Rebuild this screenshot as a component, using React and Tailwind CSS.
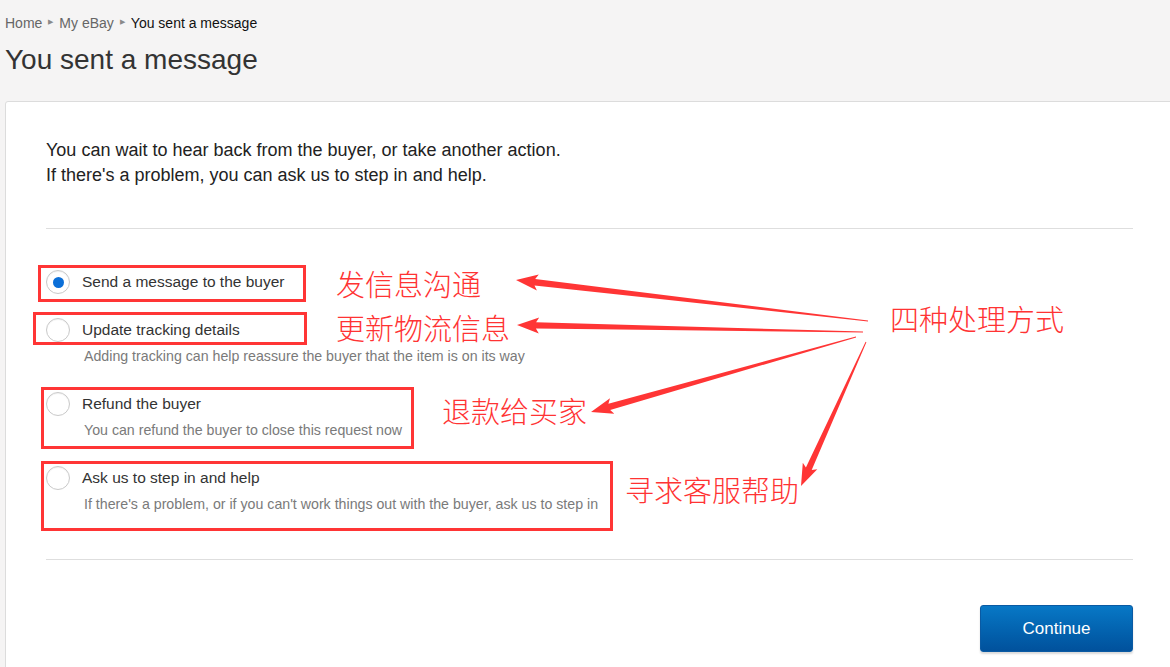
import React from 'react';

const options = [
  { key: 'message', label: 'Send a message to the buyer', checked: true },
  { key: 'tracking', label: 'Update tracking details', sub: 'Adding tracking can help reassure the buyer that the item is on its way' },
  { key: 'refund', label: 'Refund the buyer', sub: 'You can refund the buyer to close this request now' },
  { key: 'help', label: 'Ask us to step in and help', sub: "If there's a problem, or if you can't work things out with the buyer, ask us to step in" },
];

const notes = [
  { text: '发信息沟通', cls: 'left-[336px] top-[268px]' },
  { text: '更新物流信息', cls: 'left-[336px] top-[312px]' },
  { text: '退款给买家', cls: 'left-[442px] top-[395px]' },
  { text: '寻求客服帮助', cls: 'left-[625px] top-[474px]' },
  { text: '四种处理方式', cls: 'left-[890px] top-[303px]' },
];

const boxes = [
  'left-[38px] top-[265px] w-[268px] h-[37px]',
  'left-[33px] top-[312px] w-[274px] h-[33px]',
  'left-[41px] top-[387px] w-[373px] h-[62px]',
  'left-[41px] top-[461px] w-[572px] h-[70px]',
];

// tail (thin end) -> tip (arrow head)
const arrows = [
  [[868, 321], [516, 280]],
  [[863, 332], [517, 325]],
  [[856, 337], [591, 412]],
  [[866, 342], [801, 486]],
];

function arrowPoints([tail, tip]) {
  const dx = tip[0] - tail[0];
  const dy = tip[1] - tail[1];
  const len = Math.hypot(dx, dy);
  const ux = dx / len, uy = dy / len;
  const nx = -uy, ny = ux;
  const head = 19;
  const neck = [tip[0] - ux * head, tip[1] - uy * head];
  const barb = [tip[0] - ux * (head + 3), tip[1] - uy * (head + 3)];
  const p = (b, w) => `${(b[0] + nx * w).toFixed(1)},${(b[1] + ny * w).toFixed(1)}`;
  return [
    p(tail, 0.4),
    p(neck, 3.2),
    p(barb, 8),
    `${tip[0]},${tip[1]}`,
    p(barb, -8),
    p(neck, -3.2),
    p(tail, -0.4),
  ].join(' ');
}

function Radio({ checked }) {
  return (
    <div className="w-6 h-6 shrink-0 rounded-full border border-[#c9c9c9] bg-white flex items-center justify-center shadow-[inset_0_1px_1px_rgba(0,0,0,0.06)]">
      {checked && <div className="w-[11px] h-[11px] rounded-full bg-[#0b6fd8]" />}
    </div>
  );
}

function Crumb() {
  return <span className="text-[#8a8a8a] text-[7px] mx-[6px] relative top-[-1px]">▶</span>;
}

export default function App() {
  return (
    <div className="relative w-[1170px] h-[667px] overflow-hidden bg-[#f5f4f4] font-['Liberation_Sans',Arial,sans-serif]">
      <div className="px-[5px] pt-[14px]">
        <div className="h-[18px] leading-[18px] text-[14px] flex items-center">
          <span className="text-[#666]">Home</span>
          <Crumb />
          <span className="text-[#666]">My eBay</span>
          <Crumb />
          <span className="text-[#111]">You sent a message</span>
        </div>
        <h1 className="mt-[12px] text-[28px] leading-[32px] text-[#333] font-normal">You sent a message</h1>
      </div>

      <div className="mt-[25px] ml-[5px] w-[1200px] h-[700px] border border-[#dcdcdc] rounded-tl-[3px] bg-white pt-[36px] pl-[40px]">
        <div className="w-[1087px]">
          <p className="text-[18px] leading-[25px] text-[#222]">
            You can wait to hear back from the buyer, or take another action.
            <br />
            If there's a problem, you can ask us to step in and help.
          </p>
          <div className="mt-[40px] h-px bg-[#dedede]" />

          <div className="mt-[41px] flex flex-col gap-6">
            {options.map((o) => (
              <div key={o.key}>
                <div className="h-6 flex items-center">
                  <Radio checked={o.checked} />
                  <span className="ml-3 text-[15.5px] text-[#333]">{o.label}</span>
                </div>
                {o.sub && (
                  <div className="mt-[2px] pl-[38px] text-[14.2px] leading-[24px] text-[#7a7a7a]">{o.sub}</div>
                )}
              </div>
            ))}
          </div>

          <div className="mt-[43px] h-px bg-[#dedede]" />

          <div className="mt-[45px] flex justify-end">
            <button className="w-[153px] h-[47px] rounded-[3px] border border-[#0a5aa3] bg-gradient-to-b from-[#0878c6] to-[#01519c] text-white text-[17px] shadow-[0_2px_2px_rgba(0,0,0,0.15)]">
              Continue
            </button>
          </div>
        </div>
      </div>

      {boxes.map((b, i) => (
        <div key={i} className={`absolute border-[3px] border-[#ff3535] pointer-events-none ${b}`} />
      ))}

      <svg className="absolute left-0 top-0 pointer-events-none" width="1170" height="667">
        {arrows.map((a, i) => (
          <polygon key={i} points={arrowPoints(a)} fill="#ff3535" />
        ))}
      </svg>

      {notes.map((n) => (
        <div
          key={n.text}
          className={`absolute text-[29px] leading-[30px] font-light text-[#ff3333] font-['Noto_Sans_CJK_SC','Noto_Sans_CJK_JP',sans-serif] ${n.cls}`}
        >
          {n.text}
        </div>
      ))}
    </div>
  );
}
